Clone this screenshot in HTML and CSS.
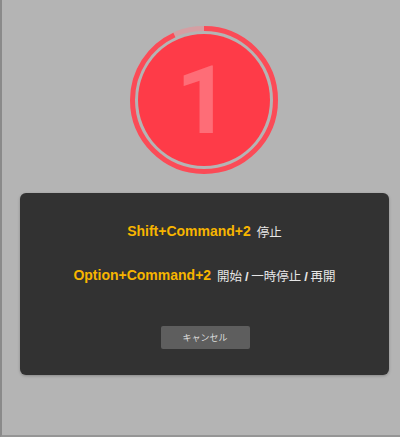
FILE: index.html
```html
<!DOCTYPE html>
<html lang="ja">
<head>
<meta charset="utf-8">
<link rel="stylesheet" href="styles.css">
</head>
<body>
<div class="page">
  <div class="timer">
    <svg class="ring" width="148" height="148" viewBox="0 0 148 148">
      <circle cx="74" cy="74" r="71.5" fill="none" stroke="#d49fa3" stroke-width="5"/>
      <circle cx="74" cy="74" r="71.5" fill="none" stroke="#fb4b57" stroke-width="5" stroke-dasharray="418 500" transform="rotate(-90 74 74)"/>
      <circle cx="74" cy="74" r="66" fill="#fe3b48"/>
    </svg>
    <span class="digit">1</span>
  </div>
  <div class="dialog">
    <p class="line"><span class="key">Shift+Command+2</span><span class="desc">停止</span></p>
    <p class="line second"><span class="key">Option+Command+2</span><span class="desc">開始 <b>/</b> 一時停止 <b>/</b> 再開</span></p>
    <div class="actions"><button class="cancel">キャンセル</button></div>
  </div>
</div>
</body>
</html>
```
FILE: styles.css
```css
html, body {
  margin: 0;
  padding: 0;
}
body {
  width: 400px;
  height: 437px;
  background: #b4b4b4;
  overflow: hidden;
  font-family: "Liberation Sans", "Noto Sans CJK JP", sans-serif;
}
.page {
  height: 437px;
  box-sizing: border-box;
  border-left: 2px solid #8a8a8a;
  border-bottom: 2px solid #959595;
  padding-top: 26px;
}
.timer {
  position: relative;
  width: 148px;
  height: 148px;
  margin-left: 128px;
}
.ring {
  display: block;
}
.digit {
  position: absolute;
  left: 0;
  top: 0;
  width: 148px;
  height: 148px;
  display: flex;
  align-items: center;
  justify-content: center;
  font-family: Roboto, sans-serif;
  font-weight: 700;
  font-size: 94px;
  color: rgba(255, 255, 255, 0.26);
  line-height: 1;
  padding-top: 2px;
  padding-right: 2px;
  box-sizing: border-box;
}
.dialog {
  margin-top: 19px;
  margin-left: 18px;
  width: 369px;
  height: 182px;
  box-sizing: border-box;
  background: #323232;
  border-radius: 6px;
  padding-top: 28px;
  box-shadow: 0 1px 3px rgba(0, 0, 0, 0.25);
}
.line {
  margin: 0;
  height: 20px;
  display: flex;
  align-items: center;
  justify-content: center;
}
.second {
  margin-top: 24px;
}
.key {
  color: #f7b500;
  font-weight: bold;
  font-size: 14px;
}
.desc {
  color: #e6e6e6;
  font-size: 12.5px;
  margin-left: 6px;
  font-family: "Noto Sans CJK JP", sans-serif;
}
.desc b {
  font-family: "Liberation Sans", sans-serif;
  font-weight: bold;
  font-size: 13px;
}
.actions {
  margin-top: 41px;
  display: flex;
  justify-content: center;
}
.cancel {
  width: 89px;
  height: 23px;
  background: #5e5e5e;
  border: none;
  border-radius: 2px;
  color: #dcdcdc;
  font-family: "Noto Sans CJK JP", sans-serif;
  font-size: 9px;
  padding: 0;
  margin-left: 1px;
}
```
